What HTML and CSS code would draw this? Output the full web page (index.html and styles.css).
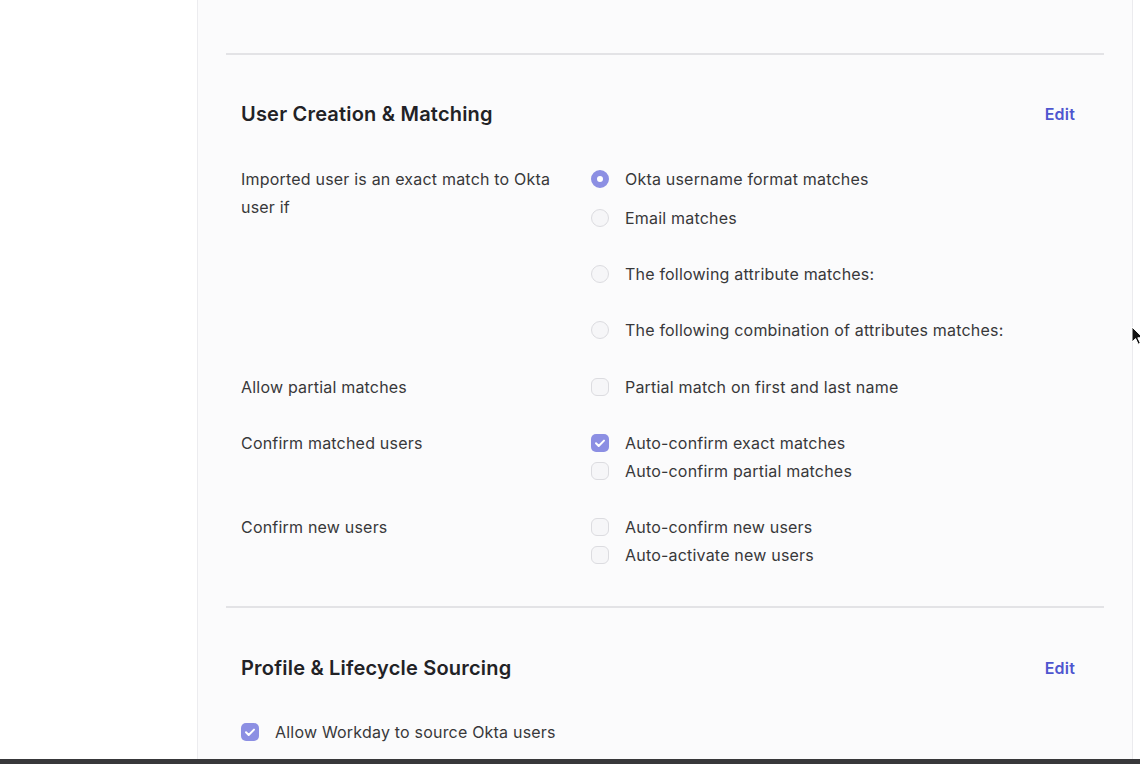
FILE: index.html
```html
<!DOCTYPE html>
<html lang="en">
<head>
<meta charset="utf-8">
<title>User Creation &amp; Matching</title>
<link rel="stylesheet" href="styles.css">
</head>
<body>
<div class="app">
  <aside class="sidebar"></aside>
  <main class="panel">
    <div class="top-space"></div>

    <section class="section">
      <div class="section-head">
        <h2 class="section-title">User Creation &amp; Matching</h2>
        <a class="edit-link" href="#">Edit</a>
      </div>

      <div class="row row-first">
        <div class="row-label">Imported user is an exact match to Okta<br>user if</div>
        <div class="row-options">
          <div class="option"><span class="radio checked"></span><span>Okta username format matches</span></div>
          <div class="option opt-tight"><span class="radio"></span><span>Email matches</span></div>
          <div class="option opt-loose"><span class="radio"></span><span>The following attribute matches:</span></div>
          <div class="option opt-loose"><span class="radio"></span><span>The following combination of attributes matches:</span></div>
        </div>
      </div>

      <div class="row row-after-first">
        <div class="row-label">Allow partial matches</div>
        <div class="row-options">
          <div class="option"><span class="checkbox"></span><span>Partial match on first and last name</span></div>
        </div>
      </div>

      <div class="row">
        <div class="row-label">Confirm matched users</div>
        <div class="row-options">
          <div class="option"><span class="checkbox checked"><svg viewBox="0 0 18 18" width="18" height="18"><path d="M5 9.3l2.7 2.7L13 6.6" fill="none" stroke="#fff" stroke-width="2" stroke-linecap="round" stroke-linejoin="round"/></svg></span><span>Auto-confirm exact matches</span></div>
          <div class="option"><span class="checkbox"></span><span>Auto-confirm partial matches</span></div>
        </div>
      </div>

      <div class="row">
        <div class="row-label">Confirm new users</div>
        <div class="row-options">
          <div class="option"><span class="checkbox"></span><span>Auto-confirm new users</span></div>
          <div class="option"><span class="checkbox"></span><span>Auto-activate new users</span></div>
        </div>
      </div>
    </section>

    <section class="section section-second">
      <div class="section-head">
        <h2 class="section-title">Profile &amp; Lifecycle Sourcing</h2>
        <a class="edit-link" href="#">Edit</a>
      </div>
      <div class="row row-first">
        <div class="option"><span class="checkbox checked"><svg viewBox="0 0 18 18" width="18" height="18"><path d="M5 9.3l2.7 2.7L13 6.6" fill="none" stroke="#fff" stroke-width="2" stroke-linecap="round" stroke-linejoin="round"/></svg></span><span>Allow Workday to source Okta users</span></div>
      </div>
    </section>
  </main>
  <div class="gutter"></div>
</div>
<div class="bottom-bar"></div>
<svg class="cursor" viewBox="0 0 12 20" width="12" height="20"><path d="M1 1v15l3.6-3.4 2.6 5.6 2.2-1-2.6-5.4H12z" fill="#111" stroke="#fff" stroke-width="1"/></svg>
</body>
</html>
```

FILE: styles.css
```css
* { box-sizing: border-box; }
html, body {
  margin: 0;
  padding: 0;
  height: 764px;
  overflow: hidden;
  background: #ffffff;
  font-family: Inter, "Noto Sans", "Liberation Sans", sans-serif;
  color: #38383a;
}
.app {
  display: flex;
  height: 759px;
}
.sidebar {
  width: 198px;
  flex: 0 0 198px;
  background: #ffffff;
  border-right: 1px solid #ececef;
}
.panel {
  flex: 0 0 935px;
  background: #fbfbfc;
  border-right: 1px solid #ebebee;
  padding: 0 28px 0 28px;
  overflow: hidden;
}
.gutter {
  flex: 1;
  background: #ffffff;
}
.top-space { height: 53px; }
.section {
  border-top: 2px solid #e3e3e6;
  padding: 45px 29px 0 15px;
}
.section-second {
  margin-top: 37px;
  padding-top: 46px;
}
.section-head {
  display: flex;
  justify-content: space-between;
  align-items: center;
  height: 28px;
}
.section-title {
  margin: 0;
  font-size: 20px;
  font-weight: 600;
  color: #222226;
  letter-spacing: 0.2px;
}
.edit-link {
  color: #4e55cf;
  font-weight: 600;
  font-size: 16px;
  letter-spacing: 0.2px;
  text-decoration: none;
}
.row {
  display: flex;
  margin-top: 28px;
  font-size: 16px;
  letter-spacing: 0.2px;
  line-height: 28px;
}
.row-first { margin-top: 37px; }
.section-second .row-first { margin-top: 36px; }
.row-after-first { margin-top: 29px; }
.row-label {
  width: 350px;
  flex: 0 0 350px;
  color: #38383a;
}
.row-options {
  display: flex;
  flex-direction: column;
}
.option {
  display: flex;
  align-items: center;
  gap: 16px;
  height: 28px;
  color: #38383a;
}
.opt-tight { margin-top: 11px; }
.opt-loose { margin-top: 28px; }
.radio {
  width: 18px;
  height: 18px;
  border-radius: 50%;
  border: 1px solid #dcdce0;
  background: #f6f6f8;
  flex: 0 0 18px;
}
.radio.checked {
  border: 6px solid #8c8fe3;
  background: #ffffff;
}
.checkbox {
  width: 18px;
  height: 18px;
  border-radius: 6px;
  border: 1px solid #dcdce0;
  background: #f6f6f8;
  flex: 0 0 18px;
  display: flex;
}
.checkbox.checked {
  border: none;
  border-radius: 5px;
  background: #8c8fe3;
}
.bottom-bar {
  height: 5px;
  background: #38383a;
}
.cursor {
  position: absolute;
  left: 1131px;
  top: 326px;
}
```
